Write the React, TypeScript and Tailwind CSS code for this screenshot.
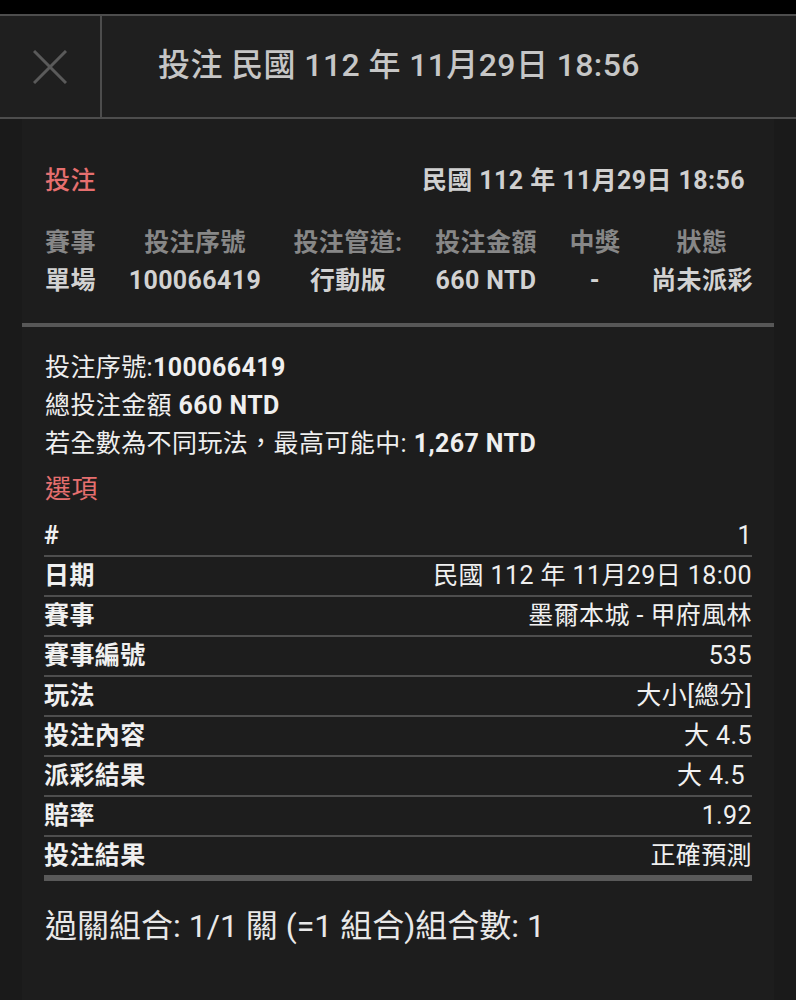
import React from "react";

const font = { fontFamily: 'Roboto, "Noto Sans CJK TC", "Noto Sans", sans-serif' };

const rows: [string, string, string?][] = [
  ["#", "1"],
  ["日期", "民國 112 年 11月29日 18:00"],
  ["賽事", "墨爾本城 - 甲府風林"],
  ["賽事編號", "535"],
  ["玩法", "大小[總分]"],
  ["投注內容", "大 4.5"],
  ["派彩結果", "大 4.5", "pr-[7px]"],
  ["賠率", "1.92"],
  ["投注結果", "正確預測"],
];

export default function App() {
  return (
    <div className="w-[796px] h-[1000px] bg-[#1a1a1a] overflow-hidden tracking-[0.4px]" style={font}>
      <div className="h-[14px] bg-black" />
      <div className="flex h-[105px] bg-[#1f1f1f] border-t-2 border-b-2 border-[#4d4d4d]">
        <div className="w-[102px] border-r-2 border-[#4d4d4d] flex items-center justify-center">
          <svg width="34" height="34" viewBox="0 0 34 34">
            <path d="M1 1 L33 33 M33 1 L1 33" stroke="#5a5a5a" strokeWidth="3" fill="none" />
          </svg>
        </div>
        <div className="flex items-center pl-[56px] pb-[3px] text-[32px] font-medium text-[#c6c6c6]">
          投注 民國 112 年 11月29日 18:56
        </div>
      </div>

      <div className="ml-[22px] w-[752px] bg-[#1d1d1d] min-h-[881px]">
        <div className="pt-[46px] pl-[23px] pr-[29px]">
          <div className="flex justify-between items-center leading-[32px] text-[25px]">
            <span className="text-[#e66f6f] font-medium">投注</span>
            <span className="text-[#d0d0d0] font-bold">民國 112 年 11月29日 18:56</span>
          </div>
          <div className="mt-[27px] grid grid-cols-[80px_140px_166px_110px_108px_106px] text-[25px] font-bold leading-[38px] whitespace-nowrap">
            <span className="text-[#878787]">賽事</span>
            <span className="text-[#878787] text-center">投注序號</span>
            <span className="text-[#878787] text-center">投注管道:</span>
            <span className="text-[#878787] text-center">投注金額</span>
            <span className="text-[#878787] text-center">中獎</span>
            <span className="text-[#878787] text-center">狀態</span>
            <span className="text-[#d2d2d2]">單場</span>
            <span className="text-[#d2d2d2] text-center">100066419</span>
            <span className="text-[#d2d2d2] text-center">行動版</span>
            <span className="text-[#d2d2d2] text-center">660 NTD</span>
            <span className="text-[#d2d2d2] text-center">-</span>
            <span className="text-[#d2d2d2] text-center">尚未派彩</span>
          </div>
        </div>
        <div className="mt-[23px] h-[4px] bg-[#575757]" />

        <div className="pt-[22px] pl-[23px] text-[25px] leading-[38px] text-[#efefef]">
          <div>投注序號:<span className="font-bold">100066419</span></div>
          <div>總投注金額 <span className="font-bold">660 NTD</span></div>
          <div>若全數為不同玩法，最高可能中: <span className="font-bold">1,267 NTD</span></div>
          <div className="mt-[7px] text-[26px] text-[#e66f6f]">選項</div>
        </div>

        <div className="mt-[9px] mx-[22px] text-[25px] text-[#f0f0f0]">
          {rows.map(([k, v, extra], i) => (
            <div
              key={k}
              className={`flex justify-between items-center ${
                i === rows.length - 1 ? "border-b-[6px] border-[#595959] h-[44px]" : "border-b-2 border-[#4e4e4e] h-[40px]"
              }`}
            >
              <span className="font-bold">{k}</span>
              <span className={extra ?? ""}>{v}</span>
            </div>
          ))}
        </div>

        <div className="mt-[25px] pl-[23px] text-[32px] leading-[40px] tracking-normal text-[#e8e8e8]">
          過關組合: 1/1 關 (=1 組合)組合數: 1
        </div>
      </div>
    </div>
  );
}
